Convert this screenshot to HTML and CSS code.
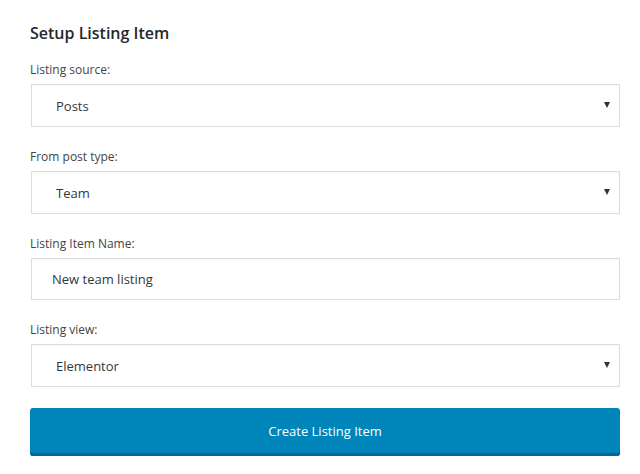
FILE: index.html
```html
<!DOCTYPE html>
<html>
<head>
<meta charset="utf-8">
<link rel="stylesheet" href="styles.css">
</head>
<body>
<div class="panel">
  <h2 class="title">Setup Listing Item</h2>
  <div class="field">
    <label class="label">Listing source:</label>
    <div class="select"><span class="value">Posts</span><span class="arrow"></span></div>
  </div>
  <div class="field">
    <label class="label">From post type:</label>
    <div class="select"><span class="value">Team</span><span class="arrow"></span></div>
  </div>
  <div class="field">
    <label class="label">Listing Item Name:</label>
    <div class="input"><span class="value">New team listing</span></div>
  </div>
  <div class="field last">
    <label class="label">Listing view:</label>
    <div class="select"><span class="value">Elementor</span><span class="arrow"></span></div>
  </div>
  <button class="btn">Create Listing Item</button>
</div>
</body>
</html>
```
FILE: styles.css
```css
* { box-sizing: border-box; }
body {
  margin: 0;
  background: #fff;
  font-family: "Open Sans", "Noto Sans", sans-serif;
  color: #32373c;
}
.panel {
  padding: 23px 20px 0 30px;
  width: 640px;
}
.title {
  margin: 0 0 19px 0;
  font-size: 16px;
  font-weight: 600;
  line-height: 20px;
  color: #23282d;
}
.field {
  display: flex;
  flex-direction: column;
  margin-bottom: 22px;
}
.field.last { margin-bottom: 21px; }
.label {
  font-size: 12px;
  line-height: 16px;
  color: #444;
  margin-bottom: 6px;
}
.select, .input {
  height: 43px;
  margin-left: 1px;
  border: 1px solid #ddd;
  box-shadow: inset 0 1px 2px rgba(0,0,0,0.04);
  display: flex;
  align-items: center;
  justify-content: space-between;
  padding: 0 9px 0 24px;
  font-size: 13px;
  color: #32373c;
}
.input { height: 42px; padding-left: 20px; }
.arrow {
  width: 0;
  height: 0;
  border-left: 3.5px solid transparent;
  border-right: 3.5px solid transparent;
  border-top: 6px solid #333;
  margin-top: -2px;
}
.btn {
  display: block;
  width: 590px;
  height: 48px;
  border: 0;
  border-radius: 3px;
  background: #0085ba;
  box-shadow: inset 0 -3px 0 #006799;
  color: #fff;
  font-family: inherit;
  font-size: 13px;
  padding: 0 0 3px 0;
}
```
